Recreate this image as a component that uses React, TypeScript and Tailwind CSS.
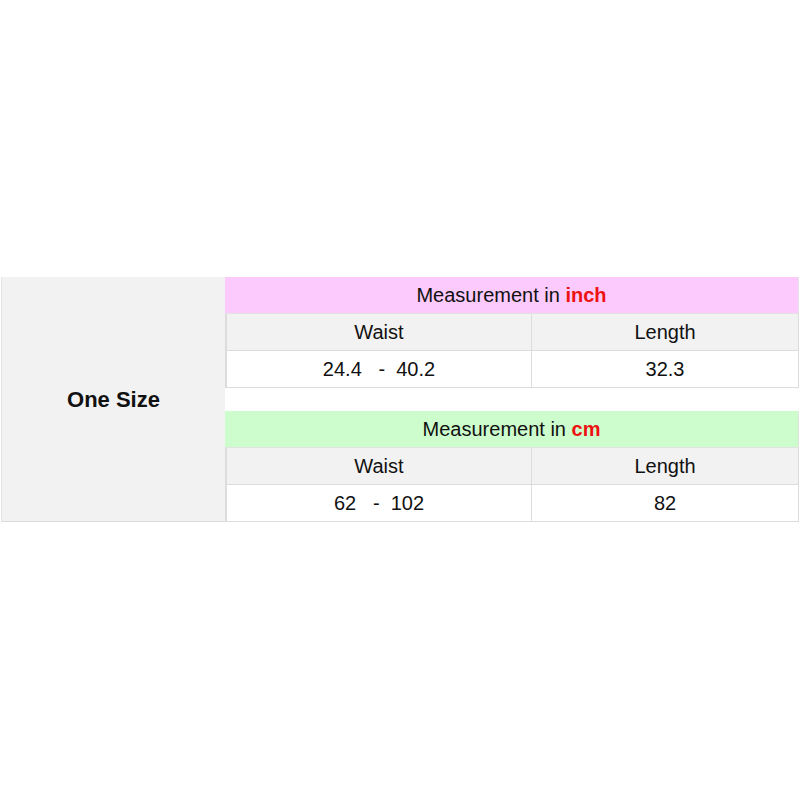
export default function App() {
  const blocks = [
    { unit: "inch", bg: "bg-[#fccafc]", waist: "24.4   -  40.2", length: "32.3" },
    { unit: "cm", bg: "bg-[#cdfdcd]", waist: "62   -  102", length: "82" },
  ];

  return (
    <div className="w-[800px] h-[800px] bg-white pt-[277px] pl-px font-['Liberation_Sans',Arial,sans-serif] text-[#111]">
      <div className="flex w-[798px] border-b border-[#dadada]">
        <div className="w-[224px] bg-[#f2f2f2] border-l border-[#e6e6e6] flex items-center justify-center text-[22px] font-bold">
          One Size
        </div>
        <div className="flex-1 flex flex-col gap-[23px]">
          {blocks.map((b, i) => (
            <div key={b.unit} className={i === 1 ? "-mb-px" : ""}>
              <div
                className={`h-[37px] ${b.bg} border-b border-r border-[#e2e2e2] flex items-center justify-center text-[20px]`}
              >
                <span className="whitespace-pre">
                  Measurement in <span className="font-bold text-[#ee1111]">{b.unit}</span>
                </span>
              </div>
              <div className="h-[37px] grid grid-cols-[305px_1fr] bg-[#f2f2f2] border-b border-l-2 border-r border-[#dcdcdc] text-[20px]">
                <div className="flex items-center justify-center border-r border-[#dcdcdc]">Waist</div>
                <div className="flex items-center justify-center">Length</div>
              </div>
              <div className="h-[37px] grid grid-cols-[305px_1fr] bg-white border-b border-l-2 border-r border-[#dcdcdc] text-[20px]">
                <div className="flex items-center justify-center border-r border-[#dcdcdc] whitespace-pre">
                  {b.waist}
                </div>
                <div className="flex items-center justify-center">{b.length}</div>
              </div>
            </div>
          ))}
        </div>
      </div>
    </div>
  );
}
